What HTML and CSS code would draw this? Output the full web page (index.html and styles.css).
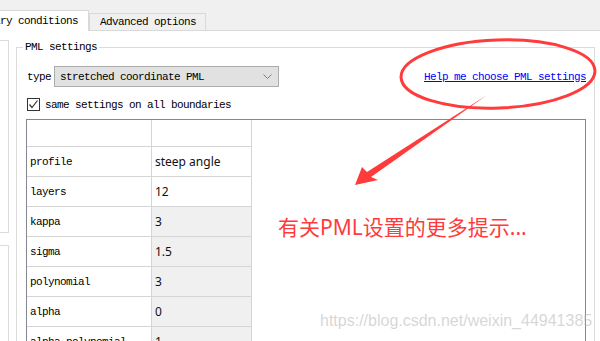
FILE: index.html
```html
<!DOCTYPE html>
<html lang="en">
<head>
    <meta charset="UTF-8">
    <title>PML settings</title>
    <link rel="stylesheet" href="styles.css">
</head>
<body>
    <div class="tabs">
        <div class="tab active">Boundary conditions</div>
        <div class="tab">Advanced options</div>
    </div>

    <div class="panel">
        <div class="side">
            <div class="side-box first"></div>
            <div class="side-box second"></div>
        </div>

        <fieldset class="pml">
            <legend>PML settings</legend>

            <div class="type-row">
                <span class="label">type</span>
                <div class="select">
                    <span>stretched coordinate PML</span>
                    <svg class="chevron" width="9" height="5" viewBox="0 0 9 5">
                        <polyline points="0.5,0.5 4.5,4.5 8.5,0.5" fill="none" stroke="#7a7a7a" stroke-width="1"/>
                    </svg>
                </div>
                <a class="help" href="#">Help me choose PML settings</a>
            </div>

            <div class="check-row">
                <span class="checkbox">
                    <svg width="11" height="11" viewBox="0 0 11 11">
                        <polyline points="1.5,5.5 4,8.5 9.5,1.5" fill="none" stroke="#333" stroke-width="1.2"/>
                    </svg>
                </span>
                <span>same settings on all boundaries</span>
            </div>

            <div class="grid-box">
                <div class="params">
                    <div class="cell"></div><div class="cell"></div>
                    <div class="cell name">profile</div><div class="cell value">steep angle</div>
                    <div class="cell name">layers</div><div class="cell value">12</div>
                    <div class="cell name">kappa</div><div class="cell value shaded">3</div>
                    <div class="cell name">sigma</div><div class="cell value shaded">1.5</div>
                    <div class="cell name">polynomial</div><div class="cell value shaded">3</div>
                    <div class="cell name">alpha</div><div class="cell value shaded">0</div>
                    <div class="cell name">alpha polynomial</div><div class="cell value shaded">1</div>
                </div>
            </div>
        </fieldset>
    </div>

    <!-- red annotation drawn over the dialog -->
    <svg class="marks" width="600" height="341" viewBox="0 0 600 341">
        <ellipse cx="498" cy="74" rx="97" ry="34" transform="rotate(-2 498 74)" fill="none" stroke="#ff3b3b" stroke-width="3"/>
        <polygon points="355,185 362,167 367,172 487,95 371,177 378,180" fill="#ff3b3b"/>
    </svg>
    <div class="note">有关PML设置的更多提示...</div>
    <div class="watermark">https://blog.csdn.net/weixin_44941385</div>
</body>
</html>
```

FILE: styles.css
```css
body {
    margin: 0;
    width: 600px;
    height: 341px;
    overflow: hidden;
    position: relative;
    background-color: #f0f0f0;
    font-family: "Liberation Mono", monospace;
    font-size: 11px;
    letter-spacing: -0.6px;
    color: #000;
}

/* Tab strip */
.tabs {
    display: flex;
    align-items: flex-end;
    height: 30px;
    border-bottom: 1px solid #d9d9d9;
    margin-left: -45px;
}

.tab {
    box-sizing: border-box;
    height: 17px;
    line-height: 16px;
    padding: 0 9px 0 10px;
    background-color: #f0f0f0;
    border: 1px solid #d9d9d9;
    border-bottom: none;
    white-space: nowrap;
}

.tab.active {
    height: 21px;
    line-height: 20px;
    padding: 0 10px 0 8px;
    margin-bottom: -1px;
    background-color: #fff;
}

/* Page body */
.panel {
    display: flex;
    height: 310px;
    background-color: #fff;
}

.side {
    width: 9px;
    flex-shrink: 0;
}

.side-box {
    box-sizing: border-box;
    border: 1px solid #dcdcdc;
    border-left: none;
}

.side-box.first {
    margin-top: 9px;
    height: 193px;
}

.side-box.second {
    margin-top: 12px;
    height: 120px;
}

.pml {
    box-sizing: border-box;
    width: 579px;
    height: 320px;
    margin: 9px 0 0 7px;
    padding: 0 8px 0 9px;
    border: 1px solid #dcdcdc;
    min-width: 0;
}

.pml legend {
    margin-left: -3px;
    padding: 0 2px;
    line-height: 14px;
}

.type-row {
    display: flex;
    align-items: center;
    height: 21px;
    margin-top: 12px;
}

.label {
    margin-left: 1px;
    margin-right: 3px;
}

.select {
    box-sizing: border-box;
    width: 225px;
    height: 21px;
    display: flex;
    align-items: center;
    justify-content: space-between;
    padding: 0 5px 0 5px;
    background-color: #e1e1e1;
    border: 1px solid #adadad;
}

.chevron {
    margin-right: 1px;
}

.help {
    margin-left: auto;
    color: #0000ff;
    text-decoration: underline;
}

.check-row {
    display: flex;
    align-items: center;
    height: 13px;
    margin-top: 11px;
}

.checkbox {
    box-sizing: border-box;
    width: 13px;
    height: 13px;
    margin: 0 5px 0 1px;
    border: 1px solid #333;
    background-color: #fff;
    display: flex;
}

/* Parameter grid */
.grid-box {
    box-sizing: border-box;
    width: 560px;
    height: 260px;
    margin-top: 8px;
    border: 1px solid #828790;
}

.params {
    display: grid;
    grid-template-columns: 125px 100px;
    grid-template-rows: 27px;
    grid-auto-rows: 30px;
}

.cell {
    box-sizing: border-box;
    display: flex;
    align-items: center;
    padding-left: 3px;
    border-right: 1px solid #d5d5d5;
    border-bottom: 1px solid #d5d5d5;
    white-space: nowrap;
    overflow: hidden;
}

.cell.value {
    font-family: "Noto Sans", sans-serif;
    font-size: 12px;
    letter-spacing: 0;
    color: #111;
}

.cell.shaded {
    background-color: #f0f0f0;
}

/* Annotation layer */
.marks {
    position: absolute;
    left: 0;
    top: 0;
    pointer-events: none;
}

.note {
    position: absolute;
    left: 278px;
    top: 213px;
    font-family: "Noto Sans", "Noto Sans CJK SC", sans-serif;
    font-size: 21px;
    line-height: 28px;
    letter-spacing: 0;
    color: #ff3b3b;
    white-space: nowrap;
}

.watermark {
    position: absolute;
    left: 320px;
    top: 312px;
    font-family: "Liberation Sans", Arial, sans-serif;
    font-size: 16px;
    letter-spacing: 0;
    color: rgba(180, 180, 180, 0.55);
    white-space: nowrap;
}
```
